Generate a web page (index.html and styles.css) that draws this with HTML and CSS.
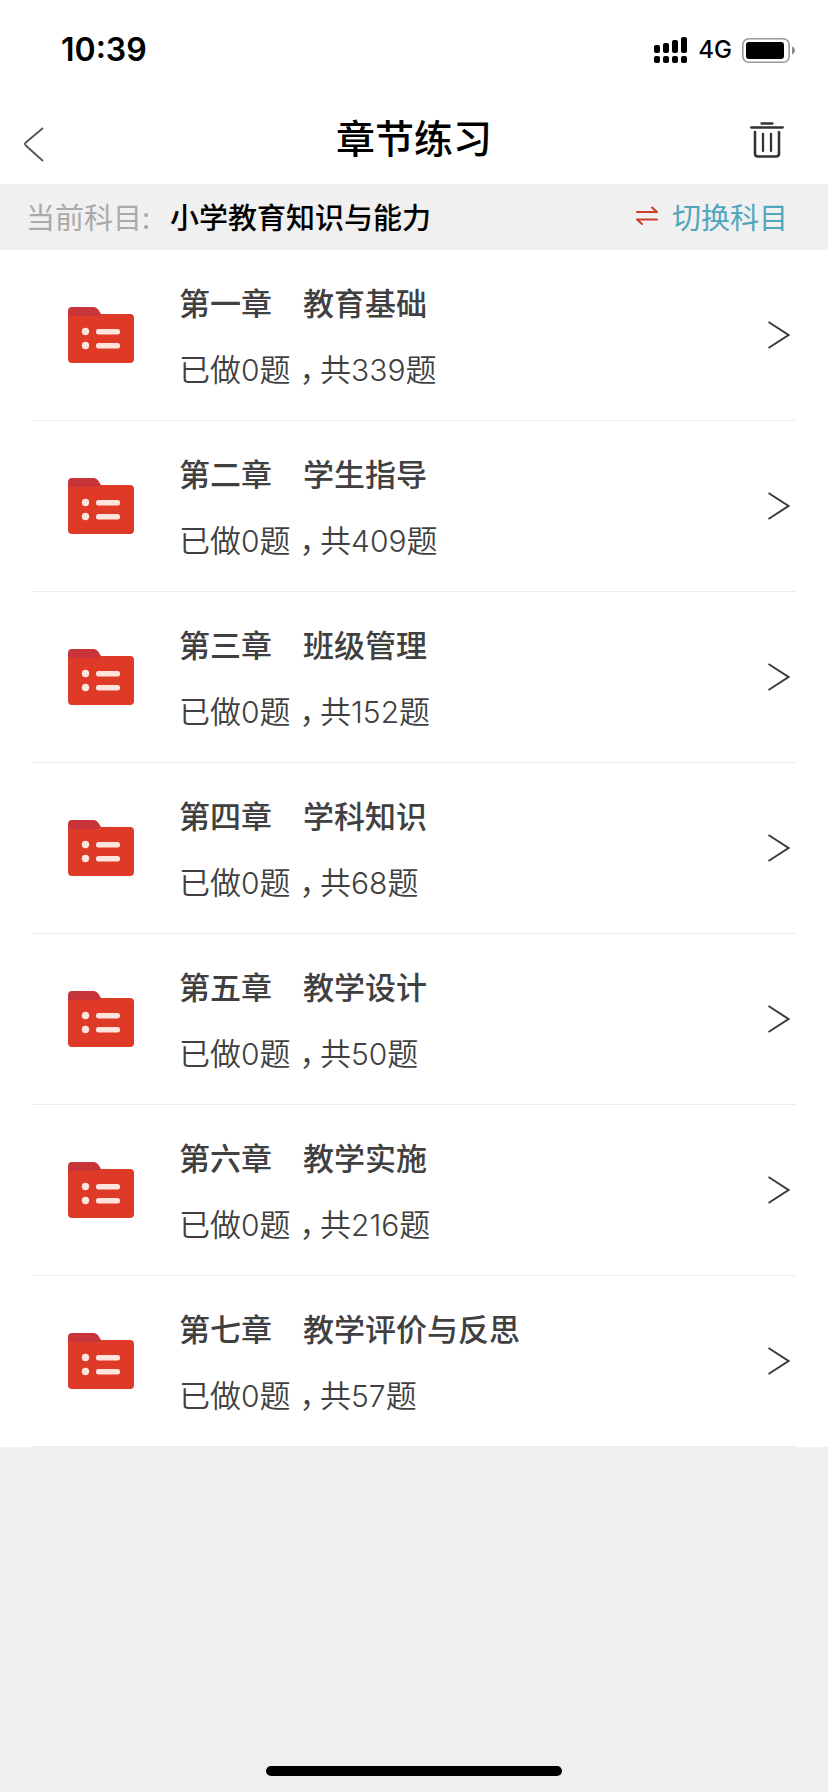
FILE: index.html
```html
<!DOCTYPE html>
<html lang="zh-CN">
<head>
<meta charset="utf-8">
<meta name="viewport" content="width=device-width, initial-scale=1">
<title>章节练习</title>
<link rel="stylesheet" href="styles.css">
</head>
<body>
<svg class="defs" aria-hidden="true">
  <symbol id="folder" viewBox="0 0 66 56">
    <path d="M0 12V4a4 4 0 0 1 4-4h21c4 0 5 2 8 7v5z" fill="#c7353b"/>
    <path d="M0 9h30l3-2h29a4 4 0 0 1 4 4v41a4 4 0 0 1-4 4H4a4 4 0 0 1-4-4z" fill="#df3a27"/>
    <g fill="#ffe3dd"><circle cx="17.500" cy="24.500" r="3.700"/><circle cx="17.500" cy="38.500" r="3.700"/><rect x="28" y="22" width="24" height="5.400" rx="2.500"/><rect x="28" y="36" width="24" height="5.400" rx="2.500"/></g>
  </symbol>
  <symbol id="arrow" viewBox="0 0 22 28">
    <path d="M.5 1 20.500 14 .5 27" fill="none" stroke="#3a3a3a" stroke-width="2"/>
  </symbol>
</svg>
<div class="screen">
  <div class="status">
    <span class="time">10:39</span>
    <div class="signals">
      <svg class="bars" width="34" height="26" viewBox="0 0 34 26" aria-hidden="true"><rect x="0" y="8" width="6" height="8" rx="2"/><rect x="9" y="6" width="6" height="10" rx="2"/><rect x="18" y="3" width="6" height="13" rx="2"/><rect x="27" y="0" width="6" height="16" rx="2"/><rect x="0" y="19" width="6" height="7" rx="2"/><rect x="9" y="19" width="6" height="7" rx="2"/><rect x="18" y="19" width="6" height="7" rx="2"/><rect x="27" y="19" width="6" height="7" rx="2"/></svg>
      <span class="network">4G</span>
      <svg width="53" height="25" viewBox="0 0 53 25" aria-hidden="true"><rect x=".8" y=".8" width="46.400" height="23.400" rx="6" fill="none" stroke="#999" stroke-width="1.600"/><rect x="4" y="4" width="38" height="17" rx="3"/><path d="M50 8.500c4 1.500 4 6.500 0 8z" fill="#888"/></svg>
    </div>
  </div>
  <header class="nav">
    <button class="icon-button" aria-label="返回"><svg width="20" height="35" viewBox="0 0 20 35"><path d="M19 1 1.800 15.500q-1.500 1.500 0 3L19 34" fill="none" stroke="#555" stroke-width="1.800"/></svg></button>
    <h1 class="title">章节练习</h1>
    <button class="icon-button trash" aria-label="删除"><svg width="34" height="36" viewBox="0 0 34 36" fill="none" stroke="#333" stroke-width="2.300" stroke-linecap="round"><path d="M11.500 1.500h11M1.200 5.500h31.600M13 12v17M21 12v17"/><path d="M5 10v21.500q0 3 3 3h18q3 0 3-3V10" stroke-width="2.600"/></svg></button>
  </header>
  <section class="subject">
    <span class="label">当前科目:</span>
    <span class="name">小学教育知识与能力</span>
    <button class="switch"><svg width="22" height="20" viewBox="0 0 22 20" fill="none" stroke="#c9402f" stroke-width="2" stroke-linecap="round" stroke-linejoin="round"><path d="M1 6h20l-5-4.500M21 13.500H1l5 4.500"/></svg>切换科目</button>
  </section>
  <main class="chapters">
    <a class="chapter" href="#c1"><svg class="folder"><use href="#folder"/></svg><span class="info"><span class="heading">第一章　教育基础</span><span class="progress">已做<span class="num">0</span>题<span class="comma">，</span>共<span class="num">339</span>题</span></span><svg class="arrow"><use href="#arrow"/></svg></a>
    <a class="chapter" href="#c2"><svg class="folder"><use href="#folder"/></svg><span class="info"><span class="heading">第二章　学生指导</span><span class="progress">已做<span class="num">0</span>题<span class="comma">，</span>共<span class="num">409</span>题</span></span><svg class="arrow"><use href="#arrow"/></svg></a>
    <a class="chapter" href="#c3"><svg class="folder"><use href="#folder"/></svg><span class="info"><span class="heading">第三章　班级管理</span><span class="progress">已做<span class="num">0</span>题<span class="comma">，</span>共<span class="num">152</span>题</span></span><svg class="arrow"><use href="#arrow"/></svg></a>
    <a class="chapter" href="#c4"><svg class="folder"><use href="#folder"/></svg><span class="info"><span class="heading">第四章　学科知识</span><span class="progress">已做<span class="num">0</span>题<span class="comma">，</span>共<span class="num">68</span>题</span></span><svg class="arrow"><use href="#arrow"/></svg></a>
    <a class="chapter" href="#c5"><svg class="folder"><use href="#folder"/></svg><span class="info"><span class="heading">第五章　教学设计</span><span class="progress">已做<span class="num">0</span>题<span class="comma">，</span>共<span class="num">50</span>题</span></span><svg class="arrow"><use href="#arrow"/></svg></a>
    <a class="chapter" href="#c6"><svg class="folder"><use href="#folder"/></svg><span class="info"><span class="heading">第六章　教学实施</span><span class="progress">已做<span class="num">0</span>题<span class="comma">，</span>共<span class="num">216</span>题</span></span><svg class="arrow"><use href="#arrow"/></svg></a>
    <a class="chapter" href="#c7"><svg class="folder"><use href="#folder"/></svg><span class="info"><span class="heading">第七章　教学评价与反思</span><span class="progress">已做<span class="num">0</span>题<span class="comma">，</span>共<span class="num">57</span>题</span></span><svg class="arrow"><use href="#arrow"/></svg></a>
  </main>
  <div class="home-bar"></div>
</div>
</body>
</html>
```
FILE: styles.css
```css
* { box-sizing: border-box; }
body { margin: 0; background: #f0f0f0; font-family: "Noto Sans CJK SC", sans-serif; color: #000; }
.defs { display: none; }
button { border: 0; padding: 0; background: none; font: inherit; cursor: pointer; }
svg { display: block; flex: none; }
.screen { min-height: 100vh; display: flex; flex-direction: column; }
.status { display: flex; justify-content: space-between; align-items: center; height: 100px; padding: 0 33px 0 61px; background: #fff; font-family: Inter, sans-serif; }
.time { font-size: 32px; font-weight: 600; line-height: 40px; }
.signals { display: flex; align-items: center; gap: 10px; }
.network { font-size: 24px; font-weight: 500; line-height: 30px; }
.nav { display: grid; grid-template-columns: 100px 1fr 100px; align-items: center; height: 84px; padding: 0 24px 12px; background: #fff; }
.icon-button { display: flex; align-items: center; height: 60px; padding-top: 16px; }
.trash { justify-content: flex-end; padding: 8px 20px 0 0; }
.title { margin: 0; text-align: center; font-size: 39px; line-height: 56px; font-weight: 500; }
.subject { display: flex; align-items: center; height: 66px; padding: 0 40px 2px 26px; font-size: 29px; line-height: 44px; }
.label { color: #aaa; }
.name { margin-left: 20px; font-weight: 500; }
.switch { display: flex; align-items: center; gap: 14px; margin-left: auto; color: #50a6bd; }
.chapters { background: #fff; }
.chapter { display: flex; align-items: center; height: 171px; margin: 0 32px; padding: 0 6px 0 36px; border-bottom: 1px solid #ececec; color: #404040; text-decoration: none; }
.folder { width: 66px; height: 56px; }
.info { display: flex; flex-direction: column; gap: 20px; flex: 1; margin-left: 45px; padding-top: 2px; font-size: 31px; line-height: 46px; }
.heading { font-weight: 500; }
.progress { font-weight: 350; }
.num { font-family: Inter, sans-serif; font-size: 30px; }
.comma { padding: 0 5px 0 9px; font-feature-settings: "halt"; }
.arrow { width: 22px; height: 28px; }
.home-bar { width: 296px; max-width: 50%; height: 10px; margin: auto auto 16px; border-radius: 5px; background: #000; }
```
